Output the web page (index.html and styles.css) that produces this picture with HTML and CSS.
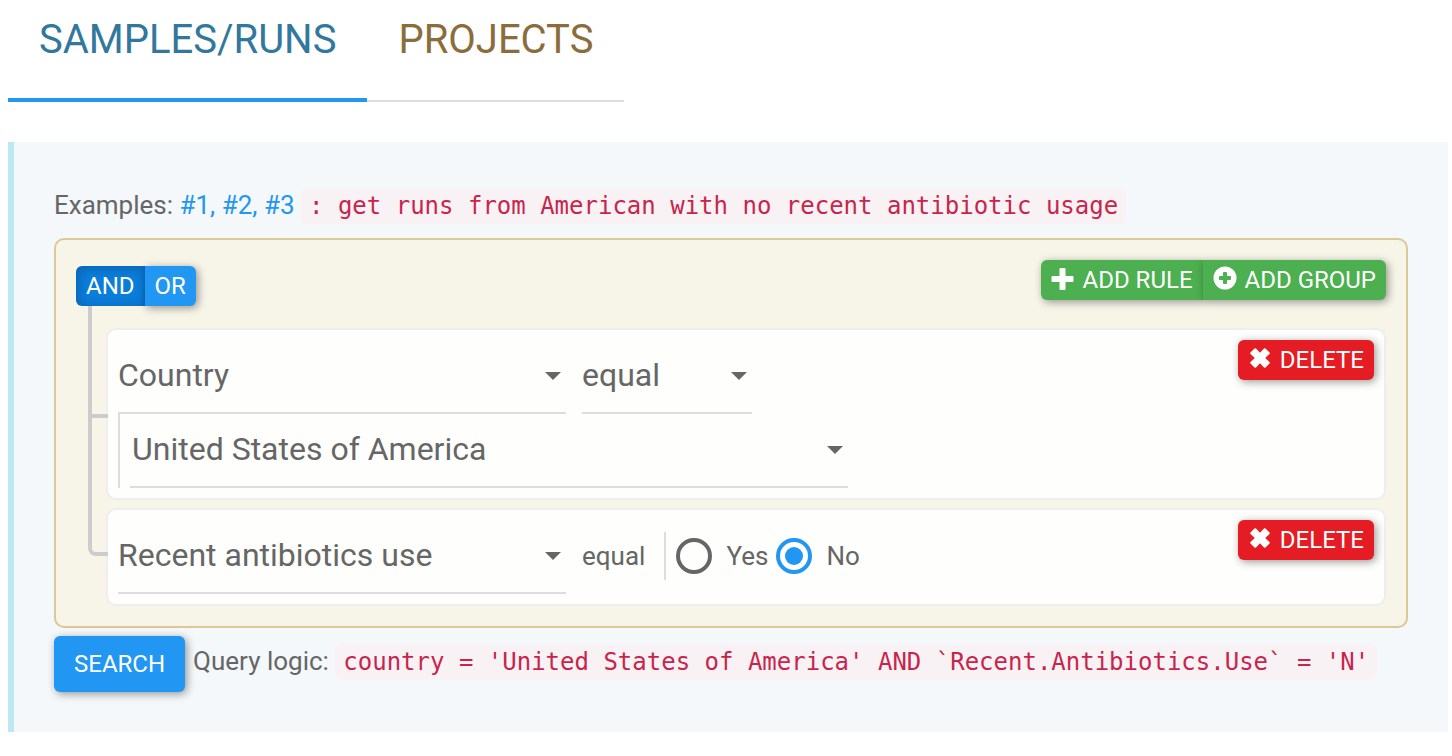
FILE: index.html
```html
<!DOCTYPE html>
<html lang="en">
<head>
<meta charset="utf-8">
<title>Sample search</title>
<link rel="stylesheet" href="styles.css">
</head>
<body>
<nav class="tabs">
  <a class="tab tab-active" href="#samples">SAMPLES/RUNS</a>
  <a class="tab tab-projects" href="#projects">PROJECTS</a>
</nav>
<main class="panel" id="samples">
  <p class="examples">Examples: <a href="#1">#1,</a> <a href="#2">#2,</a> <a href="#3">#3</a> <code>: get runs from American with no recent antibiotic usage</code></p>
  <form>
    <section class="builder">
      <header class="group-header">
        <div class="btn-group conditions">
          <button type="button" class="btn btn-primary active" aria-pressed="true">AND</button>
          <button type="button" class="btn btn-primary" aria-pressed="false">OR</button>
        </div>
        <div class="btn-group">
          <button type="button" class="btn btn-success">
            <svg class="icon" viewBox="0 0 24 24" aria-hidden="true"><path d="M9.500 0h4q1 0 1 1v7h7q1 0 1 1v4q0 1-1 1h-7v7q0 1-1 1h-4q-1 0-1-1v-7h-7q-1 0-1-1V9q0-1 1-1h7V1q0-1 1-1z"/></svg>
            ADD RULE
          </button>
          <button type="button" class="btn btn-success">
            <svg class="icon" viewBox="0 0 24 24" aria-hidden="true"><path fill-rule="evenodd" d="M12-1.500a11.500 11.500 0 1 0 0 23a11.500 11.500 0 1 0 0-23zM11 4h2q1 0 1 1v3h3q1 0 1 1v2q0 1-1 1h-3v3q0 1-1 1h-2q-1 0-1-1v-3H7q-1 0-1-1V9q0-1 1-1h3V5q0-1 1-1z"/></svg>
            ADD GROUP
          </button>
        </div>
      </header>
      <ul class="rules">
        <li class="rule">
          <div class="rule-fields">
            <select class="select select-filter" aria-label="Field"><option>Country</option></select>
            <select class="select select-operator" aria-label="Operator"><option>equal</option></select>
            <div class="value value-select">
              <select class="select" aria-label="Value"><option>United States of America</option></select>
            </div>
          </div>
          <button type="button" class="btn btn-danger">
            <svg class="icon" viewBox="0 0 24 24" aria-hidden="true"><path d="M6.500.500q.8-.6 1.500 0l4 4.300 4-4.300q.8-.6 1.500 0l4 4q.6.700 0 1.500L17.200 10l4.300 4q.6.800 0 1.500l-4 4q-.7.600-1.500 0l-4-4.300-4 4.300q-.8.600-1.500 0l-4-4q-.6-.7 0-1.500l4.300-4-4.300-4q-.6-.8 0-1.500z"/></svg>
            DELETE
          </button>
        </li>
        <li class="rule">
          <div class="rule-fields">
            <select class="select select-filter" aria-label="Field"><option>Recent antibiotics use</option></select>
            <span class="operator">equal</span>
            <div class="value value-radio">
              <label class="choice"><input type="radio" name="antibiotics" value="Y">Yes</label>
              <label class="choice"><input type="radio" name="antibiotics" value="N" checked>No</label>
            </div>
          </div>
          <button type="button" class="btn btn-danger">
            <svg class="icon" viewBox="0 0 24 24" aria-hidden="true"><path d="M6.500.500q.8-.6 1.500 0l4 4.300 4-4.300q.8-.6 1.500 0l4 4q.6.700 0 1.500L17.200 10l4.300 4q.6.800 0 1.500l-4 4q-.7.600-1.500 0l-4-4.300-4 4.300q-.8.600-1.500 0l-4-4q-.6-.7 0-1.500l4.300-4-4.300-4q-.6-.8 0-1.500z"/></svg>
            DELETE
          </button>
        </li>
      </ul>
    </section>
    <div class="actions">
      <button type="submit" class="btn btn-primary btn-search">SEARCH</button>
      <p class="logic">Query logic: <code>country = 'United States of America' AND `Recent.Antibiotics.Use` = 'N'</code></p>
    </div>
  </form>
</main>
</body>
</html>
```
FILE: styles.css
```css
*,
*::before,
*::after {
  box-sizing: border-box;
}

body {
  margin: 0 4px 24px 8px;
  background: #fff;
  color: #666;
  font: 26px/46px Roboto, "Liberation Sans", sans-serif;
}

p {
  margin: 0;
}

a {
  color: #2196f3;
  text-decoration: none;
}

.tabs {
  display: flex;
  margin-bottom: 40px;
}

.tab {
  padding: 10px 31px 30px;
  border-bottom: 2px solid #ddd;
  color: #8a6d3b;
  font-size: 40px;
  line-height: 60px;
}

.tab-active {
  padding-bottom: 28px;
  border-bottom: 4px solid #2196f3;
  color: #31789c;
}

.panel {
  padding: 40px;
  border-left: 6px solid #bce8f1;
  background: #f4f8fb;
}

.examples {
  padding-bottom: 2px;
}

code {
  padding: 4px 8px;
  border-radius: 6px;
  background: #f9f2f4;
  color: #c7254e;
  font: 24px "DejaVu Sans Mono", monospace;
}

.builder {
  margin: 8px 0;
  padding: 20px;
  border: 2px solid #dcc896;
  border-radius: 10px;
  background: #f7f4e8;
}

.group-header {
  display: flex;
  align-items: flex-start;
  justify-content: space-between;
  margin-bottom: 22px;
}

.conditions {
  margin-top: 6px;
}

.btn-group {
  display: flex;
}

.btn {
  display: flex;
  flex: none;
  align-items: center;
  gap: 8px;
  height: 40px;
  padding: 0 10px;
  border: 0;
  border-radius: 6px;
  box-shadow: 2px 2px 8px rgba(0, 0, 0, 0.4);
  color: #fff;
  font: 24px/36px Roboto, "Liberation Sans", sans-serif;
  cursor: pointer;
}

.btn-group .btn:first-child {
  border-radius: 6px 0 0 6px;
}

.btn-group .btn:last-child {
  border-radius: 0 6px 6px 0;
}

.btn-primary {
  background: #2196f3;
}

.btn-primary.active {
  background: #0a7cda;
  box-shadow: inset 2px 2px 12px rgba(0, 0, 0, 0.2);
}

.btn-success {
  background: #4caf50;
}

.btn-danger {
  background: #e51c23;
}

.icon {
  width: 24px;
  height: 24px;
  overflow: visible;
  fill: #fff;
}

.rules {
  display: flex;
  flex-direction: column;
  gap: 8px;
  margin: 0;
  padding: 0 0 0 30px;
  list-style: none;
}

.rule {
  position: relative;
  display: flex;
  align-items: flex-start;
  justify-content: space-between;
  padding: 10px;
  border: 2px solid #eee;
  border-radius: 10px;
  background: #fefefd;
}

.rule::before,
.rule::after {
  content: "";
  position: absolute;
  left: -20px;
  width: 20px;
  border: 0 solid #ccc;
  border-left-width: 4px;
}

.rule::before {
  top: -10px;
  bottom: calc(50% - 4px);
  border-bottom-width: 4px;
}

.rule::after {
  top: 50%;
  bottom: -2px;
}

.rule:first-child::before {
  top: -24px;
}

.rule:last-child::before {
  bottom: calc(50% + 1px);
  border-bottom-left-radius: 8px;
}

.rule:last-child::after {
  display: none;
}

.rule-fields {
  display: flex;
  flex: 1;
  flex-wrap: wrap;
  align-items: center;
}

.select {
  width: 100%;
  height: 74px;
  padding: 0 28px 2px 0;
  border: 0;
  border-bottom: 2px solid #ddd;
  border-radius: 0;
  appearance: none;
  background: url("data:image/svg+xml,%3Csvg xmlns='http://www.w3.org/2000/svg' width='16' height='8'%3E%3Cpath d='M0 0h16L8 8z' fill='%23666'/%3E%3C/svg%3E") no-repeat right 5px center;
  color: #666;
  font: 32px Roboto, "Liberation Sans", sans-serif;
}

.select-filter {
  width: 448px;
}

.select-operator {
  width: 170px;
}

.select-operator,
.operator {
  margin-left: 16px;
}

.operator,
.value-radio {
  margin-bottom: 2px;
}

.value {
  display: flex;
  border-left: 2px solid #ddd;
  padding-left: 10px;
}

.value-select {
  flex: 0 0 730px;
  margin-right: auto;
}

.value-select .select {
  padding-left: 2px;
}

.value-radio {
  gap: 8px;
  height: 48px;
  margin-left: 19px;
}

.choice {
  display: flex;
  align-items: center;
  gap: 14px;
}

.choice input {
  width: 36px;
  height: 36px;
  margin: 0;
  padding: 5px;
  border: 4px solid #666;
  border-radius: 50%;
  appearance: none;
}

.choice input:checked {
  border-color: #2196f3;
  background: #2196f3 content-box;
}

.actions {
  display: flex;
  align-items: center;
  gap: 8px;
}

.btn-search {
  height: 56px;
  padding: 0 20px;
}

.logic {
  padding-bottom: 6px;
}
```
